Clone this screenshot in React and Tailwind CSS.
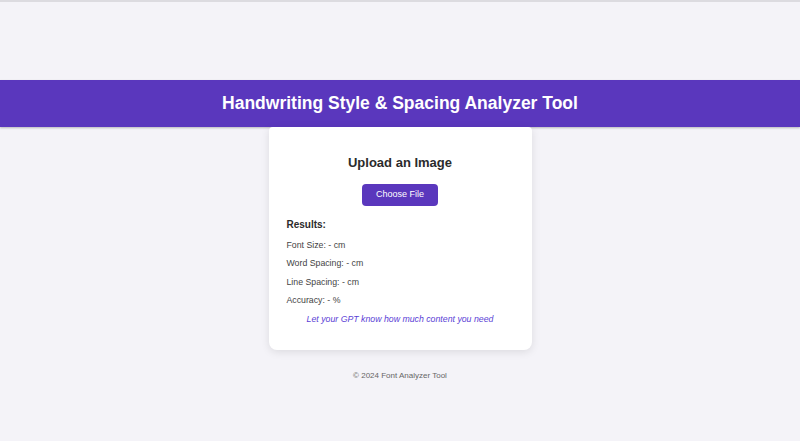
import React from "react";

const App = () => {
  const results = [
    "Font Size: - cm",
    "Word Spacing: - cm",
    "Line Spacing: - cm",
    "Accuracy: - %",
  ];

  return (
    <div
      className="min-h-[441px] bg-[#f4f3f8] flex flex-col"
      style={{ fontFamily: '"Liberation Sans", Arial, sans-serif' }}
    >
      <div className="h-[2px] bg-[#dcdbe0]" />
      <header className="mt-[78px] h-[47px] bg-[#5a37bd] flex items-center justify-center shadow-[0_1px_2px_rgba(0,0,0,0.25)]">
        <h1 className="text-white font-bold text-[17.5px]">
          Handwriting Style &amp; Spacing Analyzer Tool
        </h1>
      </header>

      <main className="flex justify-center">
        <div className="w-[263px] bg-white rounded-b-lg rounded-t-sm shadow-[0_2px_8px_rgba(0,0,0,0.1)] px-[18px] pt-[28px] pb-[26px]">
          <h2 className="text-center text-[13px] leading-[16px] font-bold text-[#2b2b2b]">
            Upload an Image
          </h2>
          <div className="flex justify-center mt-[13px]">
            <button className="w-[76px] h-[22px] bg-[#5a37bd] text-white text-[9px] rounded-[4px]">
              Choose File
            </button>
          </div>
          <h3 className="mt-[13px] text-[10px] leading-[12px] font-bold text-[#2b2b2b]">Results:</h3>
          <div className="mt-[9px] flex flex-col gap-[8.33px]">
            {results.map((r) => (
              <p key={r} className="text-[8.75px] leading-[10px] text-[#444]">
                {r}
              </p>
            ))}
          </div>
          <p className="mt-[9px] text-center italic text-[8.75px] leading-[10px] text-[#5b3fd6]">
            Let your GPT know how much content you need
          </p>
        </div>
      </main>

      <footer className="mt-[21px] text-center text-[8px] leading-[10px] text-[#666]">
        © 2024 Font Analyzer Tool
      </footer>
    </div>
  );
};

export default App;
